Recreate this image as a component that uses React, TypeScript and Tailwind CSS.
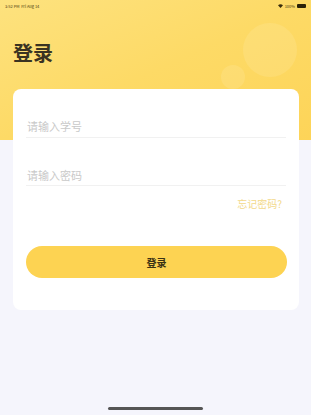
import React from 'react';

const font = { fontFamily: '"Noto Sans CJK SC", "Noto Sans", sans-serif' };

export default function App() {
  return (
    <div className="relative h-[415px] w-[311px] overflow-hidden bg-[#f5f5fc]" style={font}>
      {/* header */}
      <div className="relative h-[140px] overflow-hidden bg-gradient-to-br from-[#fde27e] via-[#fdda66] to-[#fdd458]">
        <div className="absolute left-[243px] top-[23px] h-[54px] w-[54px] rounded-full bg-white/10" />
        <div className="absolute left-[221px] top-[65px] h-[24px] w-[24px] rounded-full bg-white/10" />
        <div className="flex h-[12px] items-center justify-between px-[5px] text-[4px] leading-none text-[#4a3b10]">
          <span>3:52 PM&nbsp;&nbsp;Fri Aug 14</span>
          <span className="flex items-center gap-[2px]">
            <svg width="5" height="4" viewBox="0 0 10 8"><path d="M5 8 0 2.5a7.5 7.5 0 0 1 10 0z" fill="#3a2e0c" /></svg>
            <span>100%</span>
            <span className="h-[4px] w-[9px] rounded-[1px] bg-[#2b2208]" />
          </span>
        </div>
        <h1 className="mt-[31px] pl-[13px] text-[20px] font-bold leading-none text-[#3a3322]">登录</h1>
      </div>

      {/* card */}
      <div className="absolute left-[13px] top-[89px] flex h-[221px] w-[286px] flex-col rounded-[8px] bg-white px-[13px]">
        <div className="mt-[30px] border-b border-[#f1f1f1] pb-[4px] pl-[1px] text-[11px] leading-[14px] text-[#c9c9c9]">请输入学号</div>
        <div className="mt-[30px] border-b border-[#f1f1f1] pb-[3px] pl-[1px] text-[11px] leading-[14px] text-[#c9c9c9]">请输入密码</div>
        <div className="mt-[12px] self-end pr-[4px] text-[10px] leading-[12px] text-[#f3d98a]">忘记密码?</div>
        <button className="mt-[36px] flex h-[32px] w-[261px] items-center justify-center rounded-full bg-[#fdd352] text-[10px] font-bold text-[#3b3214]">
          登录
        </button>
      </div>

      {/* home indicator */}
      <div className="absolute bottom-[5px] left-[108px] h-[3px] w-[95px] rounded-full bg-[#555]" />
    </div>
  );
}
